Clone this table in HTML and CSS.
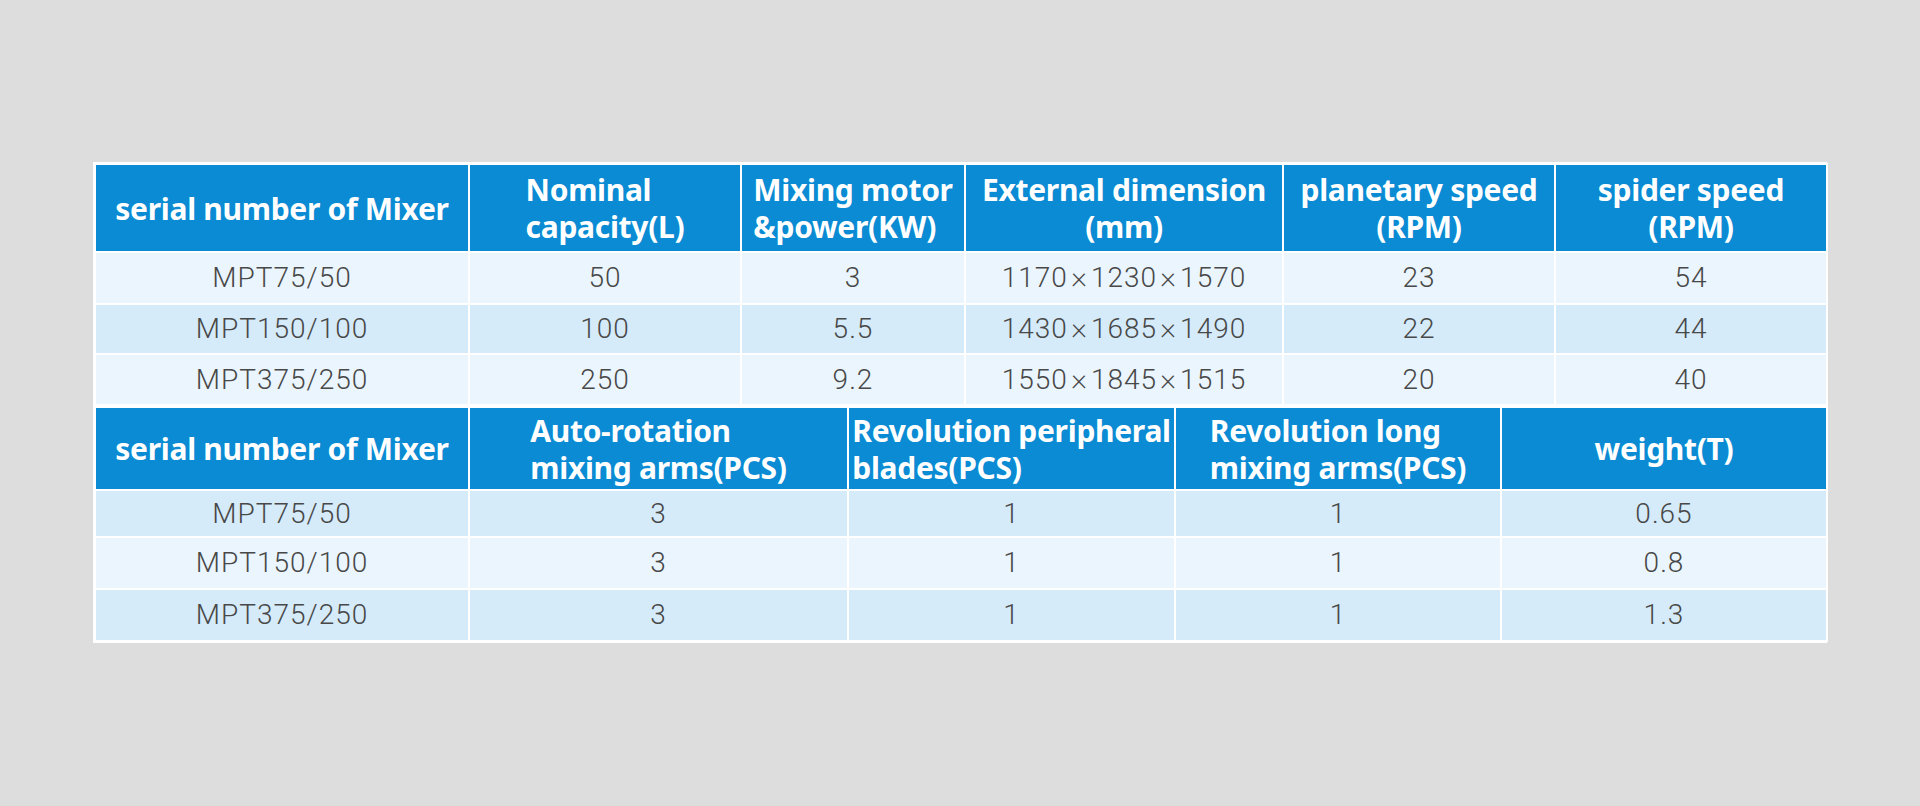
FILE: index.html
```html
<!DOCTYPE html>
<html lang="en">
<head>
<meta charset="utf-8">
<title>Mixer specifications</title>
<link rel="stylesheet" href="styles.css">
</head>
<body>
<div class="page">
  <div class="sheet">
    <table class="spec spec-a">
      <colgroup>
        <col class="a1"><col class="a2"><col class="a3"><col class="a4"><col class="a5"><col class="a6">
      </colgroup>
      <thead>
        <tr class="head head-a">
          <th>serial number of Mixer</th>
          <th><span class="blk">Nominal<br>capacity(L)</span></th>
          <th><span class="blk">Mixing motor<br>&amp;power(KW)</span></th>
          <th>External dimension<br>(mm)</th>
          <th>planetary speed<br>(RPM)</th>
          <th>spider speed<br>(RPM)</th>
        </tr>
      </thead>
      <tbody>
        <tr class="row light r1">
          <td>MPT75/50</td><td>50</td><td>3</td>
          <td>1170<span class="x">×</span>1230<span class="x">×</span>1570</td><td>23</td><td>54</td>
        </tr>
        <tr class="row dark r2">
          <td>MPT150/100</td><td>100</td><td>5.5</td>
          <td>1430<span class="x">×</span>1685<span class="x">×</span>1490</td><td>22</td><td>44</td>
        </tr>
        <tr class="row light r3">
          <td>MPT375/250</td><td>250</td><td>9.2</td>
          <td>1550<span class="x">×</span>1845<span class="x">×</span>1515</td><td>20</td><td>40</td>
        </tr>
      </tbody>
    </table>
    <table class="spec spec-b">
      <colgroup>
        <col class="b1"><col class="b2"><col class="b3"><col class="b4"><col class="b5">
      </colgroup>
      <thead>
        <tr class="head head-b">
          <th>serial number of Mixer</th>
          <th><span class="blk">Auto-rotation<br>mixing arms(PCS)</span></th>
          <th><span class="blk">Revolution peripheral<br>blades(PCS)</span></th>
          <th><span class="blk">Revolution long<br>mixing arms(PCS)</span></th>
          <th>weight(T)</th>
        </tr>
      </thead>
      <tbody>
        <tr class="row dark s1">
          <td>MPT75/50</td><td>3</td><td>1</td><td>1</td><td>0.65</td>
        </tr>
        <tr class="row light s2">
          <td class="raise">MPT150/100</td><td>3</td><td>1</td><td>1</td><td>0.8</td>
        </tr>
        <tr class="row dark s3">
          <td class="raise">MPT375/250</td><td>3</td><td>1</td><td>1</td><td>1.3</td>
        </tr>
      </tbody>
    </table>
  </div>
</div>
</body>
</html>
```

FILE: styles.css
```css
html, body {
  margin: 0;
  padding: 0;
  background: #dddddd;
}

.page {
  width: 1920px;
  height: 806px;
  padding: 162px 0 0 93px;
  box-sizing: border-box;
}

.sheet {
  width: 1734px;
  background: #ffffff;
  padding: 1px;
  box-sizing: border-box;
  display: flex;
  flex-direction: column;
}

.spec {
  width: 1732px;
  table-layout: fixed;
  border-collapse: collapse;
}

.spec th,
.spec td {
  border: 2px solid #ffffff;
  padding: 0;
  text-align: center;
  vertical-align: middle;
  white-space: nowrap;
}

.spec th {
  background: #0a8bd3;
  color: #ffffff;
  font-family: "Noto Sans", "Open Sans", sans-serif;
  font-weight: 700;
  font-size: 30px;
  letter-spacing: -0.3px;
  line-height: 37px;
}

.blk {
  display: inline-block;
  text-align: left;
}

.spec td {
  font-family: Roboto, "Liberation Sans", sans-serif;
  font-weight: 300;
  font-size: 28px;
  line-height: 32px;
  letter-spacing: 1px;
  color: #484848;
}

.x {
  font-size: 31px;
  font-weight: 200;
  line-height: 0;
  letter-spacing: 0;
  margin: 0 4px 0 3px;
}

.raise {
  padding-bottom: 8px;
}

.light td { background: #eaf5fd; }
.dark td { background: #d5ebfa; }

/* table A column widths */
.a1 { width: 374px; }
.a2 { width: 272px; }
.a3 { width: 224px; }
.a4 { width: 318px; }
.a5 { width: 272px; }
.a6 { width: 272px; }

/* table B column widths */
.b1 { width: 374px; }
.b2 { width: 379px; }
.b3 { width: 327px; }
.b4 { width: 326px; }
.b5 { width: 326px; }

.head-a { height: 88px; }
.r1 { height: 52px; }
.r2 { height: 50px; }
.r3 { height: 51px; }

.head-b { height: 83px; }
.s1 { height: 47px; }
.s2 { height: 52px; }
.s3 { height: 52px; }
```
